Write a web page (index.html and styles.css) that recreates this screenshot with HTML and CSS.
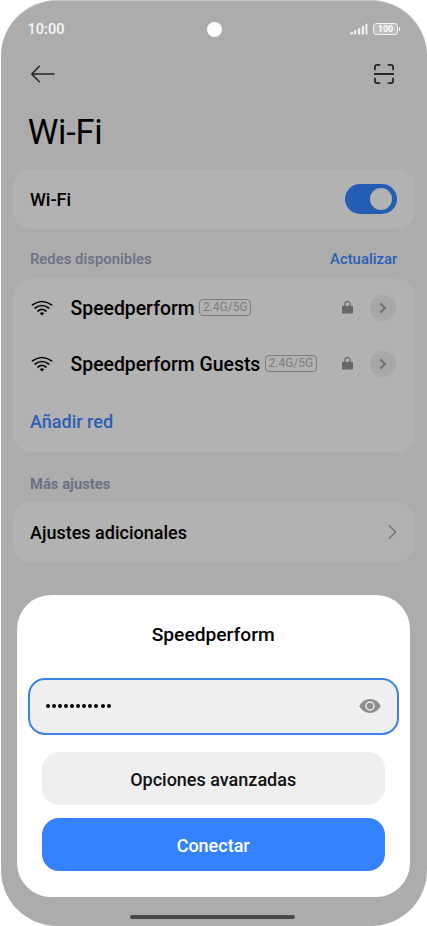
FILE: index.html
```html
<!DOCTYPE html>
<html lang="es">
<head>
<meta charset="utf-8">
<title>Wi-Fi</title>
<link rel="stylesheet" href="styles.css">
</head>
<body>
<div class="phone">
  <div class="status">
    <span class="time">10:00</span>
    <span class="camera"></span>
    <div class="indicators">
      <svg class="signal" width="18" height="12" viewBox="0 0 18 12"><path d="M0.4 11.5V9.6L3 8.7V11.5ZM4.2 11.5V7.2H6.4V11.5ZM8 11.5V5.2H10.2V11.5ZM11.8 11.5V3H14V11.5ZM15.4 11.5V0.7H17.4V11.5Z"/></svg>
      <div class="battery"><span>100</span></div>
    </div>
  </div>
  <div class="toolbar">
    <svg width="24" height="18" viewBox="0 0 24 18"><path d="M23 9H1.5M8.3 1.3L.8 9L8.3 16.7"/></svg>
    <svg class="scan" width="20" height="20" viewBox="0 0 20 20"><path d="M0.9 5.6V3.2Q0.9 .9 3.2 .9H5.6M14.4 .9H16.8Q19.1 .9 19.1 3.2V5.6M0.9 14.4V16.8Q.9 19.1 3.2 19.1H5.6M14.4 19.1H16.8Q19.1 19.1 19.1 16.8V14.4M0.7 10H19.3"/></svg>
  </div>
  <h1><span>Wi-Fi</span></h1>
  <section class="card single">
    <span class="label">Wi-Fi</span>
    <span class="toggle"><i></i></span>
  </section>
  <div class="section-head"><span>Redes disponibles</span><a class="refresh">Actualizar</a></div>
  <section class="card networks">
    <div class="network">
      <svg class="wifi" width="22" height="16" viewBox="0 0 22 16"><path d="M1.4 4.9Q11-1.9 20.6 4.9M4.2 8Q11 3 17.8 8M7 11Q11 7.9 15 11"/><path class="dot" d="M8.7 13.2Q11 11.4 13.3 13.2L11 15.6Z"/></svg>
      <span class="ssid">Speedperform</span><span class="band">2.4G/5G</span>
      <svg class="lock" width="11" height="13" viewBox="0 0 11 13"><path d="M2.8 6V3.4a2.7 2.7 0 0 1 5.4 0V6"/><rect y="4.8" width="11" height="7.8" rx="1.2"/></svg>
      <span class="more"><svg width="8" height="12" viewBox="0 0 8 12"><path d="M1.2 1.2L6 6L1.2 10.8"/></svg></span>
    </div>
    <div class="network">
      <svg class="wifi" width="22" height="16" viewBox="0 0 22 16"><path d="M1.4 4.9Q11-1.9 20.6 4.9M4.2 8Q11 3 17.8 8M7 11Q11 7.9 15 11"/><path class="dot" d="M8.7 13.2Q11 11.4 13.3 13.2L11 15.6Z"/></svg>
      <span class="ssid">Speedperform Guests</span><span class="band">2.4G/5G</span>
      <svg class="lock" width="11" height="13" viewBox="0 0 11 13"><path d="M2.8 6V3.4a2.7 2.7 0 0 1 5.4 0V6"/><rect y="4.8" width="11" height="7.8" rx="1.2"/></svg>
      <span class="more"><svg width="8" height="12" viewBox="0 0 8 12"><path d="M1.2 1.2L6 6L1.2 10.8"/></svg></span>
    </div>
    <div class="add"><a>Añadir red</a></div>
  </section>
  <div class="section-head extra"><span>Más ajustes</span></div>
  <section class="card single">
    <span class="label">Ajustes adicionales</span>
    <svg class="chevron" width="9" height="16" viewBox="0 0 9 16"><path d="M.8 1.2L7.6 8L.8 14.8"/></svg>
  </section>
  <div class="sheet">
    <h2><span>Speedperform</span></h2>
    <div class="password">
      <span class="dots"><i></i><i></i><i></i><i></i><i></i><i></i><i></i><i></i><i></i><i></i><i></i></span>
      <svg width="22" height="14" viewBox="0 0 22 14"><path d="M.2 7Q4 .1 11 .1T21.8 7Q18 13.9 11 13.9T.2 7Z"/><circle cx="11" cy="7" r="4"/></svg>
    </div>
    <div class="button advanced"><span>Opciones avanzadas</span></div>
    <div class="button connect"><span>Conectar</span></div>
  </div>
  <div class="home"></div>
</div>
</body>
</html>
```
FILE: styles.css
```css
* { box-sizing: border-box; }
body { margin: 0; background: #fff; font-family: Roboto, "Liberation Sans", sans-serif; font-weight: 500; color: #000; }
svg { display: block; flex: none; fill: none; overflow: visible; }
h1, h2 { margin: 0; }
span, a { white-space: nowrap; }

.phone { position: relative; width: 426px; height: 926px; margin-left: 1px; padding: 0 12.5px 0 11.5px; background: #acacac; border-top: 1px solid #c4c4c4; border-radius: 56px; overflow: hidden; }

.status { display: grid; grid-template-columns: 1fr 15px 1fr; align-items: center; height: 56px; padding: 0 14px 0 15px; }
.time { color: #f5f5f5; font-size: 14.6px; }
.camera { width: 15px; height: 15px; border-radius: 50%; background: #fff; }
.indicators { display: flex; justify-content: flex-end; align-items: center; gap: 5px; }
.signal { fill: #f2f2f2; }
.battery { position: relative; width: 25px; height: 12px; border: 1px solid #f5f5f5; border-radius: 3.5px; background: #bebebe; color: #fff; font-size: 9px; font-weight: 700; line-height: 10px; text-align: center; margin-right: 2.5px; }
.battery::after { content: ""; position: absolute; right: -3px; top: 3px; width: 1.5px; height: 4px; border-radius: 1px; background: #f5f5f5; }

.toolbar { display: flex; justify-content: space-between; align-items: center; height: 33px; padding: 0 20.5px 0 18px; }
.toolbar svg { stroke: #262626; stroke-width: 1.6; stroke-linecap: round; stroke-linejoin: round; }
.toolbar .scan { stroke-width: 1.8; }

h1 { height: 79px; padding: 22px 0 0 15.3px; font-size: 34.5px; font-weight: 400; line-height: 40px; letter-spacing: -0.3px; }

.card { background: #b2b2b2; border-radius: 18px; }
.single { display: flex; align-items: center; justify-content: space-between; height: 60px; padding: 0 17.5px 0 17.5px; }
.label { font-size: 18px; }
.toggle { width: 52.5px; height: 30px; padding: 4px 5px; display: flex; justify-content: flex-end; border-radius: 15px; background: #245db4; }
.toggle i { width: 22px; height: 22px; border-radius: 50%; background: #b2b2b2; }

.section-head { display: flex; justify-content: space-between; align-items: center; height: 50px; padding: 9px 17.2px 0 17.5px; font-size: 14.9px; color: #6d7084; }
.refresh { color: #2b60b2; }
.networks { height: 172.5px; margin-bottom: .5px; }
.network { display: flex; align-items: center; height: 56px; padding: 0 18.5px 0 18.5px; }
.wifi { margin-top: 1px; stroke: #080808; stroke-width: 1.7; stroke-linecap: round; }
.wifi .dot { fill: #080808; stroke: none; }
.ssid { margin-left: 17.5px; font-size: 19.4px; padding-top: 2px; }
.band { margin: 0 auto 0 4.5px; width: 52px; height: 17px; border: 1px solid #7d7d7d; border-radius: 4px; color: #7d7d7d; font-size: 12px; font-weight: 400; line-height: 15px; text-align: center; }
.lock { fill: #686868; margin-right: 17px; }
.lock path { fill: none; stroke: #686868; stroke-width: 1.2; }
.more { display: flex; align-items: center; justify-content: center; width: 26px; height: 26px; margin-top: 1px; border-radius: 50%; background: #a7a7a7; }
.more svg { stroke: #727272; stroke-width: 2.1; }
.add { display: flex; align-items: center; height: 61px; padding: 0 17.5px; font-size: 18px; color: #2b60b2; }
.extra { font-weight: 700; padding-top: 13.5px; font-size: 14.8px; }
.chevron { stroke: #747474; stroke-width: 1.4; }

.sheet { position: absolute; left: 15.7px; top: 594px; width: 393px; height: 301.5px; padding: 0 11px; border-radius: 34px; background: #fff; }
h2 { height: 82.5px; padding-top: 4px; line-height: 71px; text-align: center; font-size: 19.2px; font-weight: 500; }
.password { display: flex; align-items: center; justify-content: space-between; height: 57px; padding: 0 16px; border: 2px solid #3e83ea; border-radius: 17px; background: #efefef; }
.dots { display: flex; gap: 2.1px; }
.dots i { width: 4px; height: 4px; border-radius: 50%; background: #000; }
.password svg { fill: #8e8e8e; }
.password circle { fill: #8e8e8e; stroke: #efefef; stroke-width: 1.5; }
.button { display: flex; align-items: center; justify-content: center; height: 53px; margin: 17.5px 14px 0; border-radius: 17px; font-size: 18px; }
.advanced { background: #efefef; color: #111; padding-top: 1px; }
.connect { margin-top: 13px; padding-top: 2px; background: #3482ff; color: #fff; }
.home { position: absolute; left: 128.5px; top: 914.3px; width: 165px; height: 4px; border-radius: 2px; background: #484848; }
```
